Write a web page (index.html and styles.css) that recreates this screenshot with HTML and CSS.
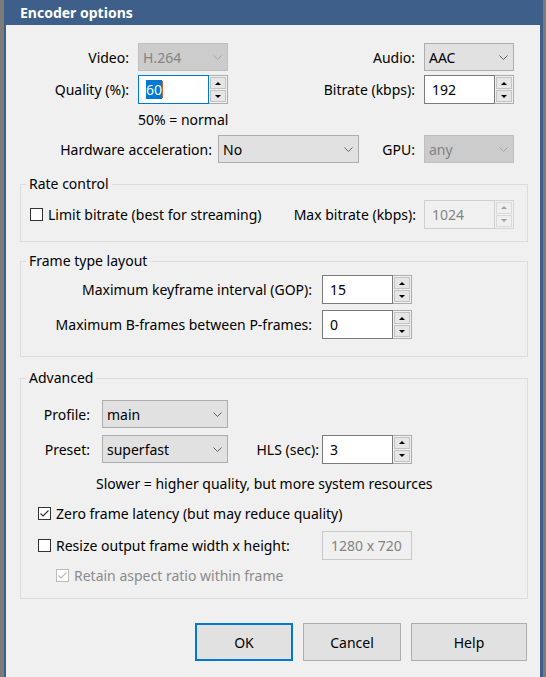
FILE: index.html
```html
<!DOCTYPE html>
<html lang="en">
<head>
    <meta charset="UTF-8">
    <title>Encoder options</title>
    <link rel="stylesheet" href="styles.css">
</head>
<body>
    <div class="window">
        <div class="titlebar">Encoder options</div>
        <div class="dialog">
            <div class="top-grid">
                <span class="lbl">Video:</span>
                <div class="combo disabled"><span>H.264</span><svg class="chev" width="9" height="5" viewBox="0 0 9 5"><polyline points="0.5,0.5 4.5,4.5 8.5,0.5"/></svg></div>
                <span class="lbl">Audio:</span>
                <div class="combo"><span>AAC</span><svg class="chev" width="9" height="5" viewBox="0 0 9 5"><polyline points="0.5,0.5 4.5,4.5 8.5,0.5"/></svg></div>

                <span class="lbl">Quality (%):</span>
                <div class="spin focused">
                    <div class="field"><span class="sel">60</span><span class="caret"></span></div>
                    <div class="spin-btns"><div class="sbtn"><i class="up"></i></div><div class="sbtn"><i class="down"></i></div></div>
                </div>
                <span class="lbl">Bitrate (kbps):</span>
                <div class="spin">
                    <div class="field">192</div>
                    <div class="spin-btns"><div class="sbtn"><i class="up"></i></div><div class="sbtn"><i class="down"></i></div></div>
                </div>

                <span class="hint">50% = normal</span>
            </div>

            <div class="hw-row">
                <span class="lbl">Hardware acceleration:</span>
                <div class="combo"><span>No</span><svg class="chev" width="9" height="5" viewBox="0 0 9 5"><polyline points="0.5,0.5 4.5,4.5 8.5,0.5"/></svg></div>
                <span class="lbl gpu">GPU:</span>
                <div class="combo disabled"><span>any</span><svg class="chev" width="9" height="5" viewBox="0 0 9 5"><polyline points="0.5,0.5 4.5,4.5 8.5,0.5"/></svg></div>
            </div>

            <fieldset class="group rate">
                <legend>Rate control</legend>
                <div class="rate-row">
                    <span class="check"></span>
                    <span class="check-text">Limit bitrate (best for streaming)</span>
                    <span class="lbl max-lbl">Max bitrate (kbps):</span>
                    <div class="spin disabled">
                        <div class="field">1024</div>
                        <div class="spin-btns"><div class="sbtn"><i class="up"></i></div><div class="sbtn"><i class="down"></i></div></div>
                    </div>
                </div>
            </fieldset>

            <fieldset class="group frames">
                <legend>Frame type layout</legend>
                <div class="frame-grid">
                    <span class="lbl">Maximum keyframe interval (GOP):</span>
                    <div class="spin">
                        <div class="field">15</div>
                        <div class="spin-btns"><div class="sbtn"><i class="up"></i></div><div class="sbtn"><i class="down"></i></div></div>
                    </div>
                    <span class="lbl">Maximum B-frames between P-frames:</span>
                    <div class="spin">
                        <div class="field">0</div>
                        <div class="spin-btns"><div class="sbtn"><i class="up"></i></div><div class="sbtn"><i class="down"></i></div></div>
                    </div>
                </div>
            </fieldset>

            <fieldset class="group advanced">
                <legend>Advanced</legend>
                <div class="adv-row">
                    <span class="lbl adv-lbl">Profile:</span>
                    <div class="combo profile"><span>main</span><svg class="chev" width="9" height="5" viewBox="0 0 9 5"><polyline points="0.5,0.5 4.5,4.5 8.5,0.5"/></svg></div>
                </div>
                <div class="adv-row second">
                    <span class="lbl adv-lbl">Preset:</span>
                    <div class="combo profile"><span>superfast</span><svg class="chev" width="9" height="5" viewBox="0 0 9 5"><polyline points="0.5,0.5 4.5,4.5 8.5,0.5"/></svg></div>
                    <span class="lbl hls-lbl">HLS (sec):</span>
                    <div class="spin">
                        <div class="field">3</div>
                        <div class="spin-btns"><div class="sbtn"><i class="up"></i></div><div class="sbtn"><i class="down"></i></div></div>
                    </div>
                </div>
                <div class="adv-hint">Slower = higher quality, but more system resources</div>
                <div class="check-row zero">
                    <span class="check checked"><svg width="11" height="11" viewBox="0 0 11 11"><polyline points="1.5,5.5 4,8 9.5,2.5"/></svg></span>
                    <span class="check-text">Zero frame latency (but may reduce quality)</span>
                </div>
                <div class="resize-row">
                    <div class="check-row">
                        <span class="check"></span>
                        <span class="check-text">Resize output frame width x height:</span>
                    </div>
                    <div class="text-box disabled">1280 x 720</div>
                </div>
                <div class="check-row retain">
                    <span class="check checked disabled"><svg width="11" height="11" viewBox="0 0 11 11"><polyline points="1.5,5.5 4,8 9.5,2.5"/></svg></span>
                    <span class="check-text muted">Retain aspect ratio within frame</span>
                </div>
            </fieldset>

            <div class="buttons">
                <button class="btn default">OK</button>
                <button class="btn">Cancel</button>
                <button class="btn help">Help</button>
            </div>
        </div>
    </div>
</body>
</html>
```

FILE: styles.css
```css
body {
    margin: 0;
    height: 677px;
    overflow: hidden;
    background: #7b7b7b;
    font-family: "Noto Sans", "Open Sans", sans-serif;
    font-size: 14px;
    color: #000;
}

.window {
    margin-left: 4px;
    width: 534px;
    height: 677px;
    border-left: 2px solid #3d5f8a;
    border-right: 3px solid #3d5f8a;
    background: #f0f0f0;
}

.titlebar {
    height: 25px;
    line-height: 25px;
    padding-left: 14px;
    background: #3d5f8a;
    color: #fff;
    font-weight: bold;
    font-size: 14px;
}

.dialog {
    padding: 18px 12px 0 14px;
}

.lbl {
    text-align: right;
    white-space: nowrap;
}

/* top block */
.top-grid {
    display: grid;
    grid-template-columns: 109px 90px 1fr 90px;
    grid-template-rows: 28px 29px 23px;
    column-gap: 9px;
    row-gap: 4px;
    align-items: center;
    padding-right: 14px;
}

.hint {
    grid-column: 2 / 4;
}

.hw-row {
    display: grid;
    grid-template-columns: 192px 141px 1fr 90px;
    column-gap: 6px;
    height: 28px;
    margin-top: 4px;
    align-items: center;
    padding-right: 14px;
}

.hw-row .gpu {
    padding-right: 3px;
}

/* combo box */
.combo {
    display: flex;
    align-items: center;
    justify-content: space-between;
    box-sizing: border-box;
    height: 28px;
    padding: 0 5px 0 4px;
    background: #e1e1e1;
    border: 1px solid #adadad;
}

.combo .chev polyline {
    fill: none;
    stroke: #606060;
    stroke-width: 1;
}

.combo.disabled {
    background: #cccccc;
    border-color: #bfbfbf;
    color: #838383;
}

.combo.disabled .chev polyline {
    stroke: #a6a6a6;
}

/* spin box */
.spin {
    display: flex;
    height: 29px;
}

.spin .field {
    flex: 1;
    display: flex;
    align-items: center;
    padding-left: 7px;
    background: #fff;
    border: 1px solid #7a7a7a;
}

.spin.focused .field {
    border-color: #0078d7;
}

.sel {
    background: #0078d7;
    color: #fff;
}

.caret {
    width: 1px;
    height: 17px;
    background: #c8643c;
}

.spin-btns {
    width: 16px;
    display: flex;
    flex-direction: column;
    gap: 1px;
    padding: 1px;
    border: 1px solid #adadad;
    border-left: none;
    background: #f0f0f0;
}

.sbtn {
    flex: 1;
    display: flex;
    align-items: center;
    justify-content: center;
    background: #e6e6e6;
    border: 1px solid #c3c3c3;
}

.sbtn i {
    width: 0;
    height: 0;
    border-left: 3px solid transparent;
    border-right: 3px solid transparent;
}

.sbtn .up {
    border-bottom: 3px solid #000;
}

.sbtn .down {
    border-top: 3px solid #000;
}

.spin.disabled .field {
    background: #f0f0f0;
    border-color: #cfcfcf;
    color: #838383;
}

.spin.disabled .spin-btns {
    border-color: #d4d4d4;
}

.spin.disabled .sbtn {
    background: #efefef;
    border-color: #dadada;
}

.spin.disabled .up {
    border-bottom-color: #a0a0a0;
}

.spin.disabled .down {
    border-top-color: #a0a0a0;
}

/* group boxes */
.group {
    margin: 0;
    padding: 0;
    min-inline-size: 0;
    border: 1px solid #dcdcdc;
}

.group legend {
    margin-left: 5px;
    padding: 0 3px;
    line-height: 20px;
}

.rate {
    margin-top: 11px;
}

.rate-row {
    display: flex;
    align-items: center;
    height: 28px;
    padding: 6px 13px 13px 9px;
}

.rate-row .check-text {
    flex: 1;
}

.max-lbl {
    margin-right: 8px;
}

.rate-row .spin {
    width: 90px;
    height: 29px;
}

.frames {
    margin-top: 9px;
}

.frame-grid {
    display: grid;
    grid-template-columns: 291px 90px;
    grid-template-rows: 29px 29px;
    column-gap: 10px;
    row-gap: 6px;
    align-items: center;
    padding: 4px 0 17px;
}

.advanced {
    margin-top: 11px;
}

.adv-row {
    display: flex;
    align-items: center;
    height: 28px;
    margin-top: 12px;
}

.adv-row.second {
    margin-top: 7px;
}

.adv-lbl {
    width: 69px;
    margin-right: 12px;
}

.combo.profile {
    width: 126px;
}

.hls-lbl {
    width: 91px;
    margin-right: 3px;
}

.adv-row .spin {
    width: 90px;
}

.adv-hint {
    height: 20px;
    line-height: 20px;
    margin: 11px 0 0 75px;
}

/* check boxes */
.check-row {
    display: flex;
    align-items: center;
    height: 20px;
}

.check {
    box-sizing: border-box;
    width: 13px;
    height: 13px;
    margin-right: 5px;
    border: 1px solid #333;
    background: #fff;
    display: flex;
    align-items: center;
    justify-content: center;
}

.check svg polyline {
    fill: none;
    stroke: #333;
    stroke-width: 1.2;
}

.check.disabled {
    border-color: #bcbcbc;
}

.check.disabled svg polyline {
    stroke: #bcbcbc;
}

.muted {
    color: #8b8b8b;
}

.check-row.zero {
    margin-top: 9px;
    padding-left: 17px;
}

.resize-row {
    display: grid;
    grid-template-columns: 284px 90px;
    height: 29px;
    margin-top: 8px;
    padding-left: 17px;
    align-items: center;
}

.text-box {
    box-sizing: border-box;
    height: 29px;
    display: flex;
    align-items: center;
    padding-left: 8px;
    border: 1px solid #c8c8c8;
}

.text-box.disabled {
    background: #f0f0f0;
    color: #838383;
}

.check-row.retain {
    margin-top: 5px;
    padding: 0 0 13px 35px;
}

/* dialog buttons */
.buttons {
    display: flex;
    justify-content: flex-end;
    gap: 10px;
    margin-top: 24px;
    margin-right: 1px;
}

.btn {
    box-sizing: border-box;
    width: 98px;
    height: 38px;
    font: inherit;
    color: #000;
    background: #e1e1e1;
    border: 1px solid #adadad;
}

.btn.default {
    border: 2px solid #0078d7;
}

.btn.help {
    width: 116px;
}
```
